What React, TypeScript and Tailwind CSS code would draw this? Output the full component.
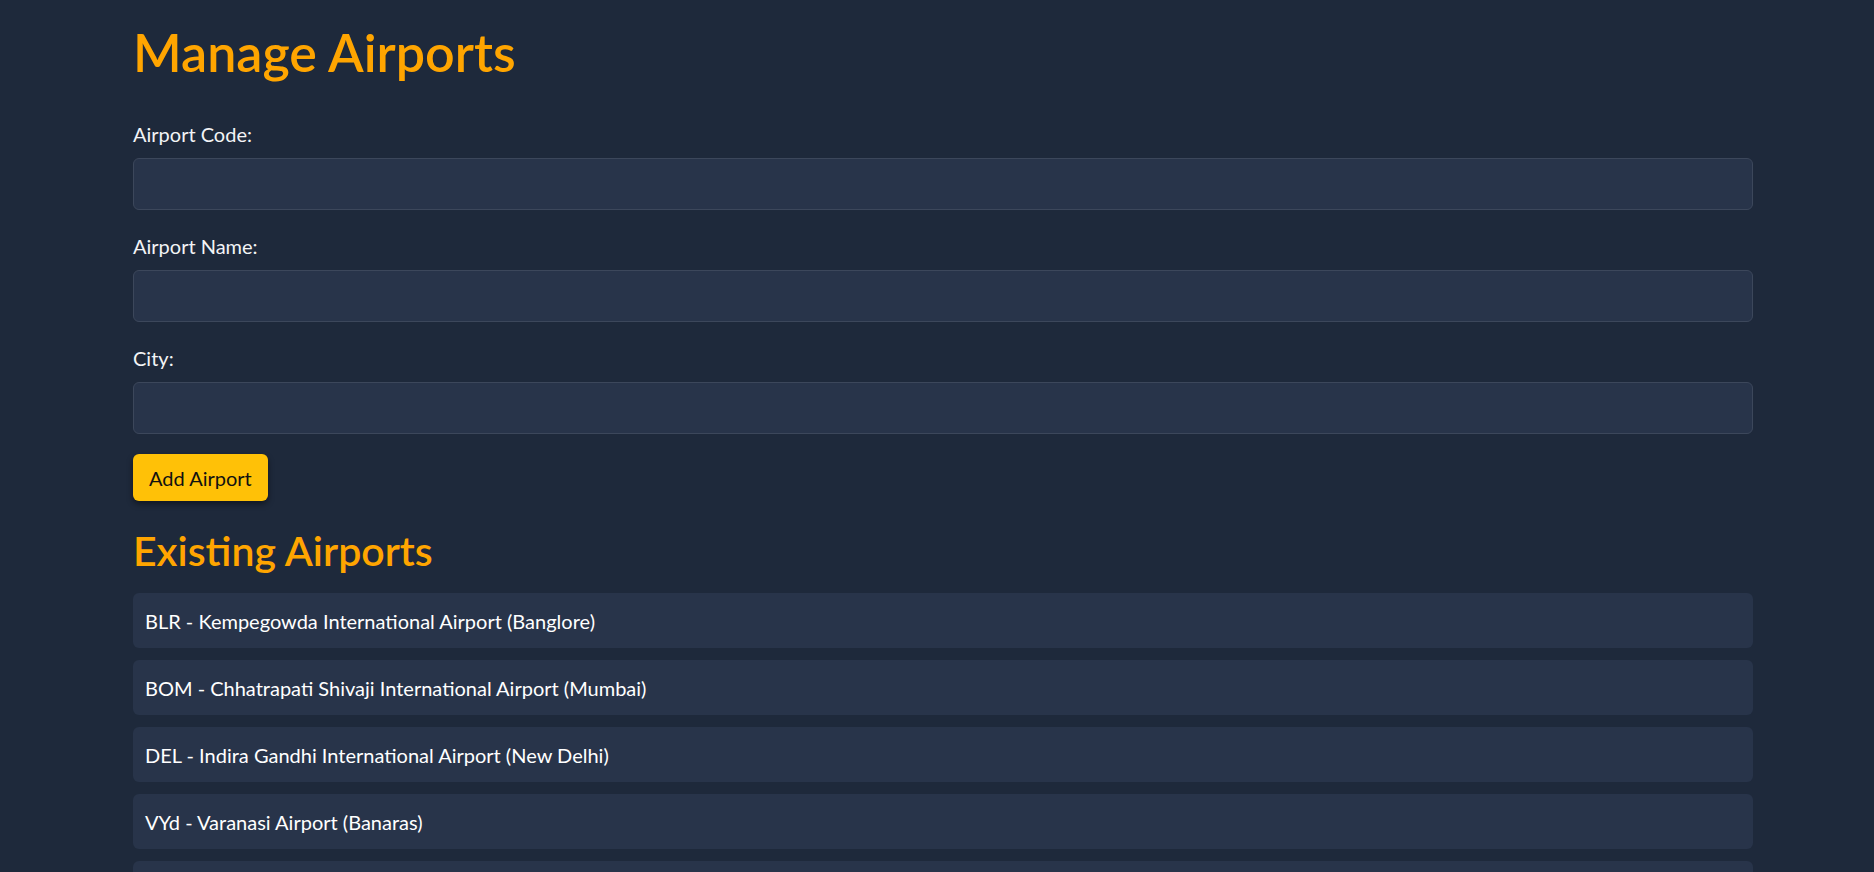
const airports = [
  { code: "BLR", name: "Kempegowda International Airport", city: "Banglore" },
  { code: "BOM", name: "Chhatrapati Shivaji International Airport", city: "Mumbai" },
  { code: "DEL", name: "Indira Gandhi International Airport", city: "New Delhi" },
  { code: "VYd", name: "Varanasi Airport", city: "Banaras" },
  { code: "HYD", name: "Rajiv Gandhi International Airport", city: "Hyderabad" },
]

function Field({ label }: { label: string }) {
  return (
    <div className="flex flex-col">
      <label className="text-[20px] leading-[24px] text-[#f3f4f6]">{label}</label>
      <input
        type="text"
        className="mt-[12px] h-[52px] w-full rounded-[6px] border border-[#3c475b] bg-[#28344a] px-3 text-[20px] text-white outline-none"
      />
    </div>
  )
}

export default function App() {
  return (
    <div
      className="min-h-screen bg-[#1e293b] pl-[133px] pt-[20px]"
      style={{ fontFamily: "'Segoe UI', Lato, 'Open Sans', sans-serif" }}
    >
      <div className="w-[1620px]">
        <h1 className="text-[52px] font-semibold leading-[64px] text-[#ffa500]">Manage Airports</h1>

        <form className="mt-[38px] flex flex-col gap-[24px]" onSubmit={(e) => e.preventDefault()}>
          <Field label="Airport Code:" />
          <Field label="Airport Name:" />
          <Field label="City:" />
        </form>

        <button className="mt-[20px] h-[47px] rounded-[6px] bg-[#ffc107] px-[16px] text-[20px] text-[#111] shadow-[0_3px_6px_rgba(0,0,0,0.45)]">
          Add Airport
        </button>

        <h2 className="mt-[26px] text-[41px] font-semibold leading-[48px] text-[#ffa500]">Existing Airports</h2>

        <ul className="mt-[18px] flex flex-col gap-[12px]">
          {airports.map((a) => (
            <li
              key={a.code}
              className="flex h-[55px] items-center rounded-[6px] bg-[#28344a] px-[12px] text-[20px] leading-[24px] text-white"
            >
              {a.code} - {a.name} ({a.city})
            </li>
          ))}
        </ul>
      </div>
    </div>
  )
}
